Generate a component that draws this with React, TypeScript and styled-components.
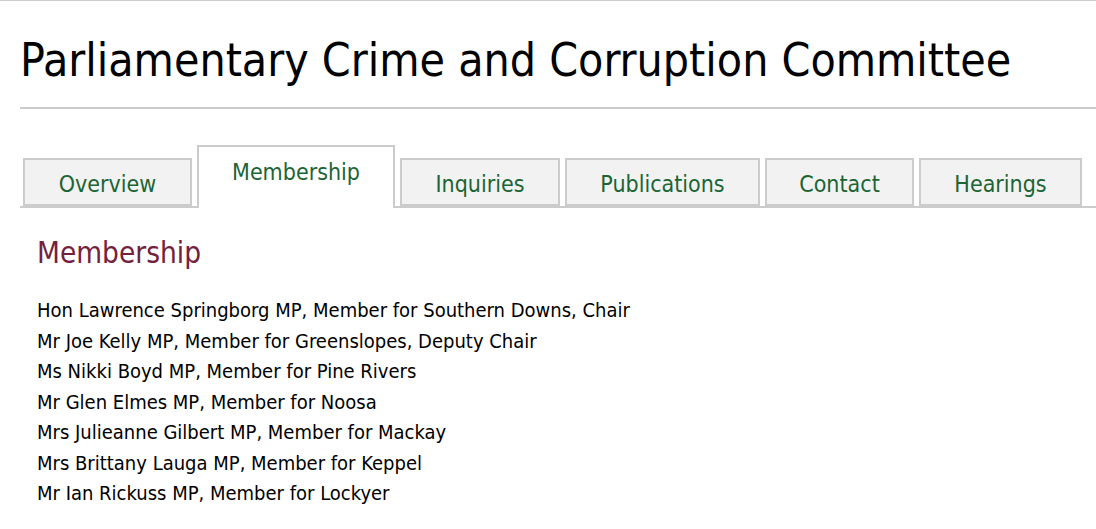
import React, { FC } from 'react';
import styled, { createGlobalStyle } from 'styled-components';

const GlobalStyle = createGlobalStyle`
  html, body {
    margin: 0;
    padding: 0;
    background: #fff;
  }
  body {
    font-family: "DejaVu Sans Condensed", "DejaVu Sans", Tahoma, sans-serif;
    border-top: 1px solid #cccccc;
  }
`;

const Page = styled.div`
  padding: 0 0 0 20px;
`;

const Title = styled.h1`
  margin: 0;
  padding: 30px 0 0 0;
  height: 76px;
  font-size: 46px;
  line-height: 58px;
  font-weight: normal;
  color: #000;
  border-bottom: 2px solid #cccccc;
`;

const TabBar = styled.ul`
  display: flex;
  align-items: flex-end;
  gap: 5px;
  margin: 36px 0 0 0;
  padding: 0 0 0 3px;
  list-style: none;
  border-bottom: 2px solid #cccccc;
`;

const Tab = styled.li<{ $active?: boolean; $width: number }>`
  box-sizing: border-box;
  display: flex;
  align-items: center;
  justify-content: center;
  width: ${(p) => p.$width}px;
  height: ${(p) => (p.$active ? 63 : 48)}px;
  margin-bottom: ${(p) => (p.$active ? -2 : 0)}px;
  padding: ${(p) => (p.$active ? '0 0 12px' : '3px 0 0')};
  background: ${(p) => (p.$active ? '#ffffff' : '#f2f2f2')};
  border: 2px solid #cccccc;
  border-bottom: ${(p) => (p.$active ? 'none' : '2px solid #cccccc')};
  color: #1b6434;
  font-size: 23px;
`;

const Content = styled.div`
  padding: 27px 0 0 17px;
`;

const Heading = styled.h2`
  margin: 0 0 24px 0;
  font-size: 29.5px;
  line-height: 36px;
  font-weight: normal;
  color: #73213d;
`;

const MemberList = styled.ul`
  margin: 0;
  padding: 0;
  list-style: none;
`;

const Member = styled.li`
  font-size: 20px;
  line-height: 30.5px;
  color: #000;
`;

const tabs = [
  { label: 'Overview', width: 169 },
  { label: 'Membership', width: 198, active: true },
  { label: 'Inquiries', width: 160 },
  { label: 'Publications', width: 195 },
  { label: 'Contact', width: 149 },
  { label: 'Hearings', width: 163 },
];

const members = [
  'Hon Lawrence Springborg MP, Member for Southern Downs, Chair',
  'Mr Joe Kelly MP, Member for Greenslopes, Deputy Chair',
  'Ms Nikki Boyd MP, Member for Pine Rivers',
  'Mr Glen Elmes MP, Member for Noosa',
  'Mrs Julieanne Gilbert MP, Member for Mackay',
  'Mrs Brittany Lauga MP, Member for Keppel',
  'Mr Ian Rickuss MP, Member for Lockyer',
];

const App: FC = () => (
  <>
    <GlobalStyle />
    <Page>
      <Title>Parliamentary Crime and Corruption Committee</Title>
      <TabBar>
        {tabs.map((t) => (
          <Tab key={t.label} $active={t.active} $width={t.width}>
            {t.label}
          </Tab>
        ))}
      </TabBar>
      <Content>
        <Heading>Membership</Heading>
        <MemberList>
          {members.map((m) => (
            <Member key={m}>{m}</Member>
          ))}
        </MemberList>
      </Content>
    </Page>
  </>
);

export default App;
